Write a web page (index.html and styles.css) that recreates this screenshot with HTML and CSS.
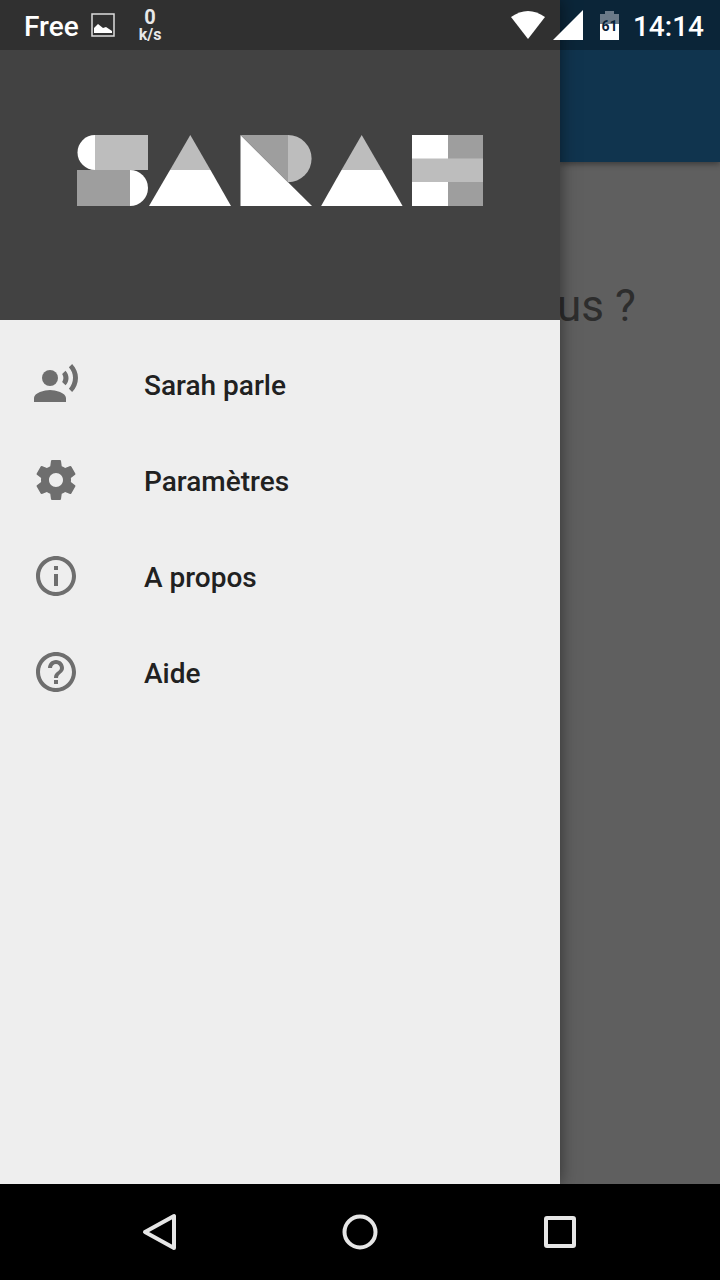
FILE: index.html
```html
<!DOCTYPE html>
<html lang="fr">
<head>
<meta charset="utf-8">
<meta name="viewport" content="width=device-width, initial-scale=1">
<title>Sarah</title>
<link rel="stylesheet" href="styles.css">
</head>
<body>
<div class="screen">
  <header class="status">
    <span class="carrier">Free</span>
    <svg class="picture" viewBox="0 0 24 24" aria-hidden="true">
      <rect x="1" y="1" width="22" height="22" fill="none" stroke="#dcdcdc" stroke-width="1.500"/>
      <path d="M3 20v-5l4-4 5 4 3-1 6 4v2z" fill="#fff"/>
    </svg>
    <span class="speed"><span class="speed-value">0</span><span class="speed-unit">k/s</span></span>
    <span class="spacer"></span>
    <svg class="wifi" viewBox="0 0 36 30" aria-hidden="true"><path d="M1 7Q18-5 35 7L18 29z" fill="#fff"/></svg>
    <svg class="signal" viewBox="0 0 30 30" aria-hidden="true"><path d="M30 0v30H0z" fill="#fff"/></svg>
    <span class="battery">61</span>
    <time class="clock">14:14</time>
  </header>

  <aside class="drawer">
    <div class="brand">
      <svg class="logo" viewBox="77 135 406 71" role="img" aria-label="Sarah">
        <g fill="#fff">
          <path d="M95 135a17.500 17.500 0 0 0 0 35z"/>
          <path d="M130 170a18 18 0 0 1 0 36z"/>
          <path d="M170 170h40.500L231 206h-82z"/>
          <path d="M240.500 135v71H312z"/>
          <path d="M341.500 170h40.500L402.600 206h-81.500z"/>
          <path d="M412 135h36v71h-36z"/>
        </g>
        <g fill="#9e9e9e">
          <path d="M77 170h53v36H77z"/>
          <path d="M240.500 135H288v47.500z"/>
          <path d="M448 135h35v71h-35z"/>
        </g>
        <g fill="#bdbdbd">
          <path d="M95 135h53v35H95z"/>
          <path d="M190.300 135L210.500 170H170z"/>
          <path d="M288 135a23.600 23.600 0 0 1 0 47.200z"/>
          <path d="M361.700 135L382 170h-40.500z"/>
          <path d="M412 158.500h71V182h-71z"/>
        </g>
      </svg>
    </div>
    <nav class="menu">
      <a class="item" href="#parle">
        <svg class="icon" viewBox="0 0 24 24" aria-hidden="true"><circle cx="9" cy="9" r="4"/><path d="M9 15c-2.670 0-8 1.340-8 4v2h16v-2c0-2.660-5.330-4-8-4zm7.760-9.640l-1.680 1.690c.84 1.180.84 2.710 0 3.890l1.680 1.690c2.020-2.020 2.020-5.070 0-7.270zM20.070 2l-1.630 1.630c2.770 3.020 2.770 7.560 0 10.740L20.070 16c3.900-3.890 3.910-9.950 0-14z"/></svg>
        <span class="label">Sarah parle</span>
      </a>
      <a class="item" href="#parametres">
        <svg class="icon" viewBox="0 0 24 24" aria-hidden="true"><path d="M19.430 12.980c.04-.32.07-.64.07-.98s-.03-.66-.07-.98l2.110-1.650c.19-.15.24-.42.12-.64l-2-3.460c-.12-.22-.39-.3-.61-.22l-2.490 1c-.52-.4-1.080-.73-1.690-.98l-.38-2.650C14.460 2.180 14.250 2 14 2h-4c-.25 0-.46.18-.49.42l-.38 2.650c-.61.25-1.170.59-1.690.98l-2.490-1c-.23-.09-.49 0-.61.22l-2 3.460c-.13.22-.07.49.12.64l2.110 1.650c-.04.32-.07.65-.07.98s.03.66.07.98l-2.110 1.650c-.19.15-.24.42-.12.64l2 3.460c.12.22.39.3.61.22l2.490-1c.52.4 1.080.73 1.690.98l.38 2.650c.03.24.24.42.49.42h4c.25 0 .46-.18.49-.42l.38-2.650c.61-.25 1.170-.59 1.690-.98l2.490 1c.23.09.49 0 .61-.22l2-3.460c.12-.22.07-.49-.12-.64l-2.110-1.650zM12 15.500c-1.930 0-3.500-1.570-3.500-3.500s1.570-3.500 3.500-3.500 3.500 1.570 3.500 3.500-1.570 3.500-3.500 3.500z"/></svg>
        <span class="label">Paramètres</span>
      </a>
      <a class="item" href="#apropos">
        <svg class="icon" viewBox="0 0 24 24" aria-hidden="true"><path d="M11 17h2v-6h-2v6zm1-15C6.480 2 2 6.480 2 12s4.480 10 10 10 10-4.480 10-10S17.520 2 12 2zm0 18c-4.410 0-8-3.590-8-8s3.590-8 8-8 8 3.590 8 8-3.590 8-8 8zM11 9h2V7h-2v2z"/></svg>
        <span class="label">A propos</span>
      </a>
      <a class="item" href="#aide">
        <svg class="icon" viewBox="0 0 24 24" aria-hidden="true"><path d="M11 18h2v-2h-2v2zm1-16C6.480 2 2 6.480 2 12s4.480 10 10 10 10-4.480 10-10S17.520 2 12 2zm0 18c-4.410 0-8-3.590-8-8s3.590-8 8-8 8 3.590 8 8-3.590 8-8 8zm0-14c-2.210 0-4 1.790-4 4h2c0-1.100.9-2 2-2s2 .9 2 2c0 2-3 1.750-3 5h2c0-2.250 3-2.500 3-5 0-2.210-1.790-4-4-4z"/></svg>
        <span class="label">Aide</span>
      </a>
    </nav>
  </aside>

  <main class="page">
    <div class="toolbar"></div>
    <p class="question">us ?</p>
  </main>
</div>

<footer class="navbar">
  <button class="key" aria-label="Retour"><svg class="key-icon" viewBox="0 0 40 40"><path d="M34 4v32L5 20z"/></svg></button>
  <button class="key" aria-label="Accueil"><svg class="key-icon" viewBox="0 0 40 40"><circle cx="20" cy="20" r="15.500"/></svg></button>
  <button class="key" aria-label="Applications"><svg class="key-icon" viewBox="0 0 40 40"><rect x="6" y="6" width="28" height="28" rx="1"/></svg></button>
</footer>
</body>
</html>
```
FILE: styles.css
```css
* {
  box-sizing: border-box;
}

body {
  margin: 0;
  min-height: 100vh;
  display: flex;
  flex-direction: column;
  background: #000;
  font-family: Roboto, "Noto Sans", sans-serif;
}

.screen {
  position: relative;
  flex: 1;
  display: grid;
  grid-template-columns: 7fr 2fr;
  overflow: hidden;
}

/* Status bar, laid over the drawer and the page */
.status {
  position: absolute;
  top: 0;
  left: 0;
  right: 0;
  z-index: 2;
  height: 50px;
  padding: 0 16px 0 24px;
  display: flex;
  align-items: center;
  background: rgba(0, 0, 0, 0.27);
  color: #fff;
  font-size: 28px;
  font-weight: 500;
  line-height: 32px;
}

.carrier,
.clock,
.label {
  padding-top: 4px;
}

.picture {
  width: 24px;
  height: 24px;
  margin-left: 12px;
}

.speed {
  display: flex;
  flex-direction: column;
  align-items: center;
  margin-left: 24px;
  padding-top: 2px;
  color: #e8e8e8;
  font-weight: 700;
}

.speed-value {
  font-size: 20px;
  line-height: 18px;
}

.speed-unit {
  font-size: 16px;
  line-height: 18px;
}

.spacer {
  flex: 1;
}

.wifi {
  width: 36px;
  height: 30px;
}

.signal {
  width: 30px;
  height: 30px;
  margin-left: 7px;
}

.battery {
  width: 19px;
  height: 29px;
  margin: 0 14px 0 17px;
  background:
    linear-gradient(#6b7a88, #6b7a88) center top / 9px 3px no-repeat,
    linear-gradient(#6b7a88 10px, #fff 10px) 0 3px / 19px 26px no-repeat;
  color: #08233a;
  font-size: 14px;
  font-weight: 700;
  line-height: 30px;
  text-align: center;
}

/* Drawer */
.drawer {
  z-index: 1;
  background: #eee;
  box-shadow: 0 0 16px rgba(0, 0, 0, 0.5);
}

.brand {
  height: 320px;
  padding-top: 20px;
  display: flex;
  align-items: center;
  justify-content: center;
  background: #424242;
}

.logo {
  width: 406px;
  height: 71px;
}

.menu {
  padding: 16px 0;
}

.item {
  height: 96px;
  padding: 0 32px;
  display: flex;
  align-items: center;
  gap: 64px;
  color: #212121;
  font-size: 28px;
  font-weight: 500;
  line-height: 32px;
  text-decoration: none;
}

.icon {
  width: 48px;
  height: 48px;
  fill: #6e6e6e;
}

/* Dimmed page */
.page {
  background: #5f5f5f;
}

.toolbar {
  height: 162px;
  background: #10344e;
  box-shadow: 0 2px 6px rgba(0, 0, 0, 0.4);
}

/* The line starts slightly under the drawer's edge */
.question {
  margin: 116px 0 0 -3px;
  color: #2d2d2d;
  font-size: 44px;
  line-height: 56px;
}

/* System navigation */
.navbar {
  height: 96px;
  padding: 0 60px;
  display: flex;
  background: #000;
}

.key {
  flex: 1;
  display: flex;
  align-items: center;
  justify-content: center;
  padding: 0;
  border: 0;
  background: none;
}

.key-icon {
  width: 40px;
  height: 40px;
  fill: none;
  stroke: #e6e6e6;
  stroke-width: 4;
  stroke-linejoin: round;
}
```
